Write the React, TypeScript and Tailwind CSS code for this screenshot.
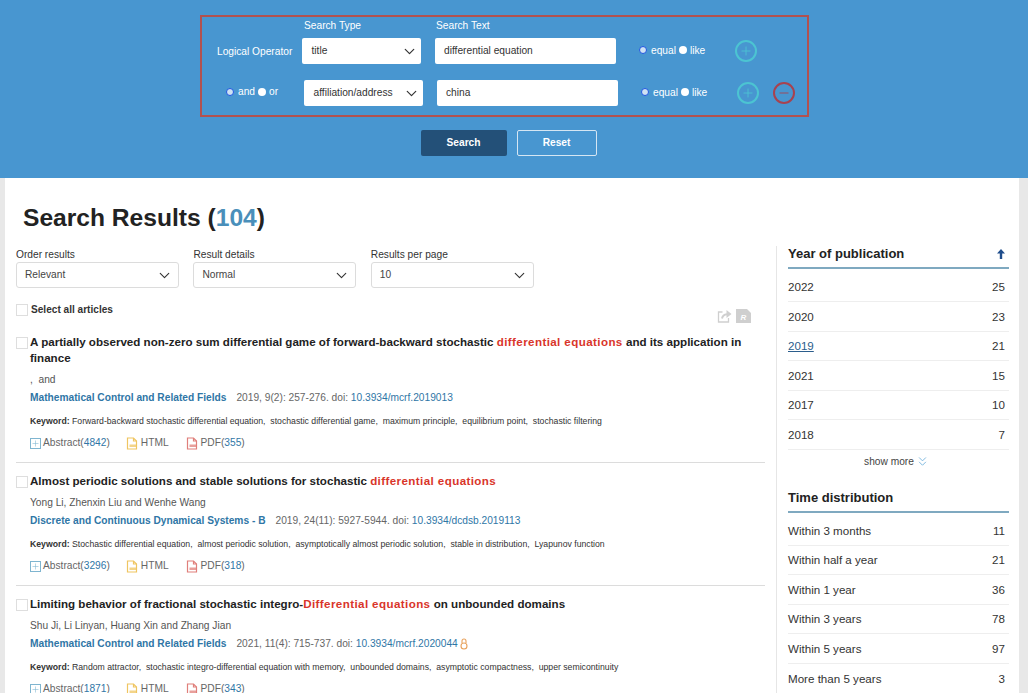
import React, { ReactNode } from "react";
import { ChevronDown, ChevronsDown, Plus, Minus } from "lucide-react";

const Radio = ({ filled, label }: { filled?: boolean; label: string }) => (
	<span className="flex items-center">
		<span
			className={
				filled
					? "mr-[3px] size-[8px] rounded-full bg-white"
					: "mr-[4px] size-[8px] rounded-full border-[1.5px] border-[#1f55e0] bg-[#cfe2f3]"
			}
		/>
		<span>{label}</span>
	</span>
);

const CircleButton = ({ minus }: { minus?: boolean }) => (
	<span
		className={
			minus
				? "flex size-[22px] items-center justify-center rounded-full border-2 border-[#a8424f] text-[#a8424f]"
				: "flex size-[22px] items-center justify-center rounded-full border-2 border-[#4cc4d2] text-[#4cc4d2]"
		}
	>
		{minus ? <Minus size={14} strokeWidth={1.5} /> : <Plus size={14} strokeWidth={1.5} />}
	</span>
);

const SearchRow = ({
	left,
	type,
	text,
	minus,
	offset,
}: {
	left: ReactNode;
	type: string;
	text: string;
	minus?: boolean;
	offset?: boolean;
}) => (
	<div className={offset ? "flex h-[26px] items-center pl-[2px]" : "flex h-[26px] items-center"}>
		<div className="w-[85px] shrink-0 pb-[2px]">{left}</div>
		<div className="flex h-[26px] w-[119px] shrink-0 items-center justify-between rounded-[2px] bg-white pr-[3px] pl-[9.5px] text-[10.2px] text-[#333]">
			{type}
			<ChevronDown size={17} strokeWidth={1.7} className="text-[#333]" />
		</div>
		<div className="ml-[14px] flex h-[26px] w-[181px] shrink-0 items-center rounded-[2px] bg-white pl-[9px] text-[10.2px] text-[#333]">
			{text}
		</div>
		<div className="ml-[23px] flex w-[96px] shrink-0 gap-[3px] pb-[1px] text-[10.2px] text-white">
			<Radio label="equal" />
			<Radio filled label="like" />
		</div>
		<CircleButton />
		{minus && (
			<span className="ml-[14px]">
				<CircleButton minus />
			</span>
		)}
	</div>
);

const SearchPanel = () => (
	<div className="h-[178px] bg-[#4896d0] pt-[15px]">
		<div className="ml-[200px] h-[102px] w-[609px] border-2 border-[#b2514f] pl-[15px]">
			<div className="flex h-[21px] pt-[2px] pl-[87px] text-[10.2px] leading-[14px] text-white">
				<span className="w-[132px]">Search Type</span>
				<span>Search Text</span>
			</div>
			<SearchRow
				left={<span className="text-[10.2px] whitespace-nowrap text-white">Logical Operator</span>}
				type="title"
				text="differential equation"
			/>
			<div className="h-[16px]" />
			<SearchRow
				offset
				minus
				left={
					<div className="flex gap-[3px] pl-[7px] text-[10.2px] text-white">
						<Radio label="and" />
						<Radio filled label="or" />
					</div>
				}
				type="affiliation/address"
				text="china"
			/>
		</div>
		<div className="mt-[13px] flex justify-center gap-[10px] pr-[11px] text-[10.2px] font-bold text-white">
			<button className="h-[26px] w-[86px] rounded-[2px] bg-[#235078]">Search</button>
			<button className="h-[26px] w-[80px] rounded-[2px] border border-[#d5e6f3]">Reset</button>
		</div>
	</div>
);

const Dropdown = ({ label, value }: { label: string; value: string }) => (
	<div className="w-[163px]">
		<div className="text-[10.2px] leading-[13px] text-[#333]">{label}</div>
		<div className="mt-[1px] flex h-[26px] items-center justify-between rounded-[3px] border border-[#dcdcdc] pr-[5px] pl-[8px] text-[10.2px] text-[#444]">
			{value}
			<ChevronDown size={17} strokeWidth={1.6} className="text-[#333]" />
		</div>
	</div>
);

const Box = () => (
	<span className="mt-[3px] mr-[2px] block size-[12px] shrink-0 border border-[#dedede] bg-white" />
);

const Red = ({ children }: { children: ReactNode }) => (
	<span className="tracking-[0.4px] text-[#d9352a]">{children}</span>
);

// html + pdf glyphs: outlined page with a folded corner and a band across the lower part
const PageIcon = ({ color }: { color: string }) => (
	<svg width="12" height="13" viewBox="0 0 12 13" fill="none" stroke={color} strokeWidth="1.2">
		<path d="M1.5 9V1h6l3 3v8h-9z" />
		<path d="M7.5 1v3h3" />
		<rect x="3.5" y="7.5" width="7" height="2.5" fill={color} stroke="none" opacity="0.75" />
	</svg>
);

const Article = ({
	title,
	authors,
	journal,
	cite,
	doi,
	keywords,
	abstract,
	pdf,
	open,
	last,
}: {
	title: ReactNode;
	authors: string;
	journal: string;
	cite: string;
	doi: string;
	keywords: string;
	abstract: string;
	pdf: string;
	open?: boolean;
	last?: boolean;
}) => (
	<div className={last ? "" : "mb-[10px] border-b border-[#dcdcdc] pb-[12px]"}>
		<div className="flex text-[11.6px] leading-[16px] font-bold text-[#222]">
			<Box />
			<div>{title}</div>
		</div>
		<div className="mt-[6.5px] pl-[14px] text-[10.2px] leading-[14px] whitespace-pre text-[#555]">{authors}</div>
		<div className="mt-[4px] flex items-center pl-[14px] text-[10.2px] leading-[14px] text-[#666]">
			<span className="mr-[10px] font-bold text-[#2f76a6]">{journal}</span>
			<span>{cite}&nbsp;</span>
			<span className="text-[#2f76a6]">{doi}</span>
			{open && (
				<svg width="8" height="12" viewBox="0 0 8 12" fill="none" stroke="#e8a25c" strokeWidth="1.1" className="ml-[2px]">
					<path d="M2 5V3a2 2 0 0 1 4 0v2" />
					<circle cx="4" cy="8" r="3" />
				</svg>
			)}
		</div>
		<div className="mt-[10.5px] pl-[14px] text-[8.7px] leading-[12px] whitespace-pre-wrap text-[#333]">
			<span className="font-bold">Keyword:</span> {keywords}
		</div>
		<div className="mt-[9px] flex items-center pl-[14px] text-[10.2px] leading-[14px] text-[#666]">
			<span className="mr-[2px] flex size-[11px] items-center justify-center border border-[#7fb5d0] text-[#7fb5d0]">
				<Plus size={9} strokeWidth={1.5} />
			</span>
			Abstract(<span className="text-[#2f76a6]">{abstract}</span>)
			<span className="mr-[3px] ml-[16px]">
				<PageIcon color="#efc561" />
			</span>
			HTML
			<span className="mr-[3px] ml-[17px]">
				<PageIcon color="#e07f7a" />
			</span>
			PDF(<span className="text-[#2f76a6]">{pdf}</span>)
		</div>
	</div>
);

const Row = ({ label, n, link }: { label: string; n: number; link?: boolean }) => (
	<div className="flex h-[29.6px] items-center justify-between border-b border-[#eeeeee] pr-[4px] text-[11.6px] text-[#333]">
		<span className={link ? "text-[#2b5d8c] underline" : ""}>{label}</span>
		<span>{n}</span>
	</div>
);

const SideHead = ({ title, arrow }: { title: string; arrow?: boolean }) => (
	<div className="mb-[3.5px] flex h-[23px] items-start justify-between border-b-2 border-[#7fa9c0] text-[13px] leading-[15px] font-bold text-[#222]">
		{title}
		{arrow && (
			<svg width="8" height="10" viewBox="0 0 8 10" className="mt-[3px] mr-[4px]" fill="#1f4d8c">
				<path d="M4 0l4 4.5H5.2V10H2.8V4.5H0z" />
			</svg>
		)}
	</div>
);

export default function App() {
	return (
		<div className="h-[693px] overflow-hidden bg-[#e8e8e8] font-['Liberation_Sans',Arial,sans-serif]">
			<SearchPanel />
			<div className="mr-[9px] ml-[5px] h-[515px] bg-white pl-[11px]">
				<h1 className="pt-[25px] pl-[7px] text-[24.6px] leading-[29px] font-bold text-[#222]">
					Search Results (<span className="text-[#4a8fba]">104</span>)
				</h1>
				<div className="mt-[15px] flex">
					<div className="w-[749px] shrink-0">
						<div className="flex gap-[14.4px] pt-[1px]">
							<Dropdown label="Order results" value="Relevant" />
							<Dropdown label="Result details" value="Normal" />
							<Dropdown label="Results per page" value="10" />
						</div>
						<div className="mt-[13px] flex h-[25px] justify-between text-[10.1px] leading-[13px] font-bold text-[#333]">
							<div className="flex">
								<Box />
								<span className="mt-[2px] ml-[1px]">Select all articles</span>
							</div>
							<div className="mt-[8px] mr-[14px] flex gap-[4px]">
								<svg width="15" height="14" viewBox="0 0 15 14" fill="none" stroke="#cfcfcf" strokeWidth="1.3">
									<path d="M5.5 3H1.5v10h10V9" />
									<path d="M5 9.5c.5-2.5 2-4 5-4.2" strokeWidth="2" />
									<path d="M9.5 1l5 4-5 4z" fill="#cfcfcf" stroke="none" />
								</svg>
								<svg width="15" height="14" viewBox="0 0 15 14">
									<path d="M0 0h11l4 4v10H0z" fill="#cfcfcf" />
									<text x="4.5" y="10.5" fontSize="8" fontWeight="700" fontStyle="italic" fill="#fff">
										R
									</text>
								</svg>
							</div>
						</div>
						<div className="mt-[8px]">
							<Article
								title={
									<>
										A partially observed non-zero sum differential game of forward-backward stochastic{" "}
										<Red>differential equations</Red> and its application in
										<br />
										finance
									</>
								}
								authors=",  and"
								journal="Mathematical Control and Related Fields"
								cite="2019, 9(2): 257-276. doi:"
								doi="10.3934/mcrf.2019013"
								keywords="Forward-backward stochastic differential equation,  stochastic differential game,  maximum principle,  equilibrium point,  stochastic filtering"
								abstract="4842"
								pdf="355"
							/>
							<Article
								title={
									<>
										Almost periodic solutions and stable solutions for stochastic <Red>differential equations</Red>
									</>
								}
								authors="Yong Li, Zhenxin Liu and Wenhe Wang"
								journal="Discrete and Continuous Dynamical Systems - B"
								cite="2019, 24(11): 5927-5944. doi:"
								doi="10.3934/dcdsb.2019113"
								keywords="Stochastic differential equation,  almost periodic solution,  asymptotically almost periodic solution,  stable in distribution,  Lyapunov function"
								abstract="3296"
								pdf="318"
							/>
							<Article
								last
								open
								title={
									<>
										Limiting behavior of fractional stochastic integro-<Red>Differential equations</Red> on unbounded domains
									</>
								}
								authors="Shu Ji, Li Linyan, Huang Xin and Zhang Jian"
								journal="Mathematical Control and Related Fields"
								cite="2021, 11(4): 715-737. doi:"
								doi="10.3934/mcrf.2020044"
								keywords="Random attractor,  stochastic integro-differential equation with memory,  unbounded domains,  asymptotic compactness,  upper semicontinuity"
								abstract="1871"
								pdf="343"
							/>
						</div>
					</div>
					<aside className="-mt-[1px] ml-[11px] h-[480px] w-[233px] shrink-0 border-l border-[#e6e6e6] pl-[11px]">
						<SideHead title="Year of publication" arrow />
						<Row label="2022" n={25} />
						<Row label="2020" n={23} />
						<Row label="2019" n={21} link />
						<Row label="2021" n={15} />
						<Row label="2017" n={10} />
						<Row label="2018" n={7} />
						<div className="mt-[4px] flex items-center justify-center gap-[1px] pr-[3px] text-[10.2px] leading-[13px] text-[#444]">
							show more
							<ChevronsDown size={15} strokeWidth={1.4} className="text-[#6fb0dc]" />
						</div>
						<div className="mt-[20.5px]">
							<SideHead title="Time distribution" />
						</div>
						<Row label="Within 3 months" n={11} />
						<Row label="Within half a year" n={21} />
						<Row label="Within 1 year" n={36} />
						<Row label="Within 3 years" n={78} />
						<Row label="Within 5 years" n={97} />
						<Row label="More than 5 years" n={3} />
					</aside>
				</div>
			</div>
		</div>
	);
}
